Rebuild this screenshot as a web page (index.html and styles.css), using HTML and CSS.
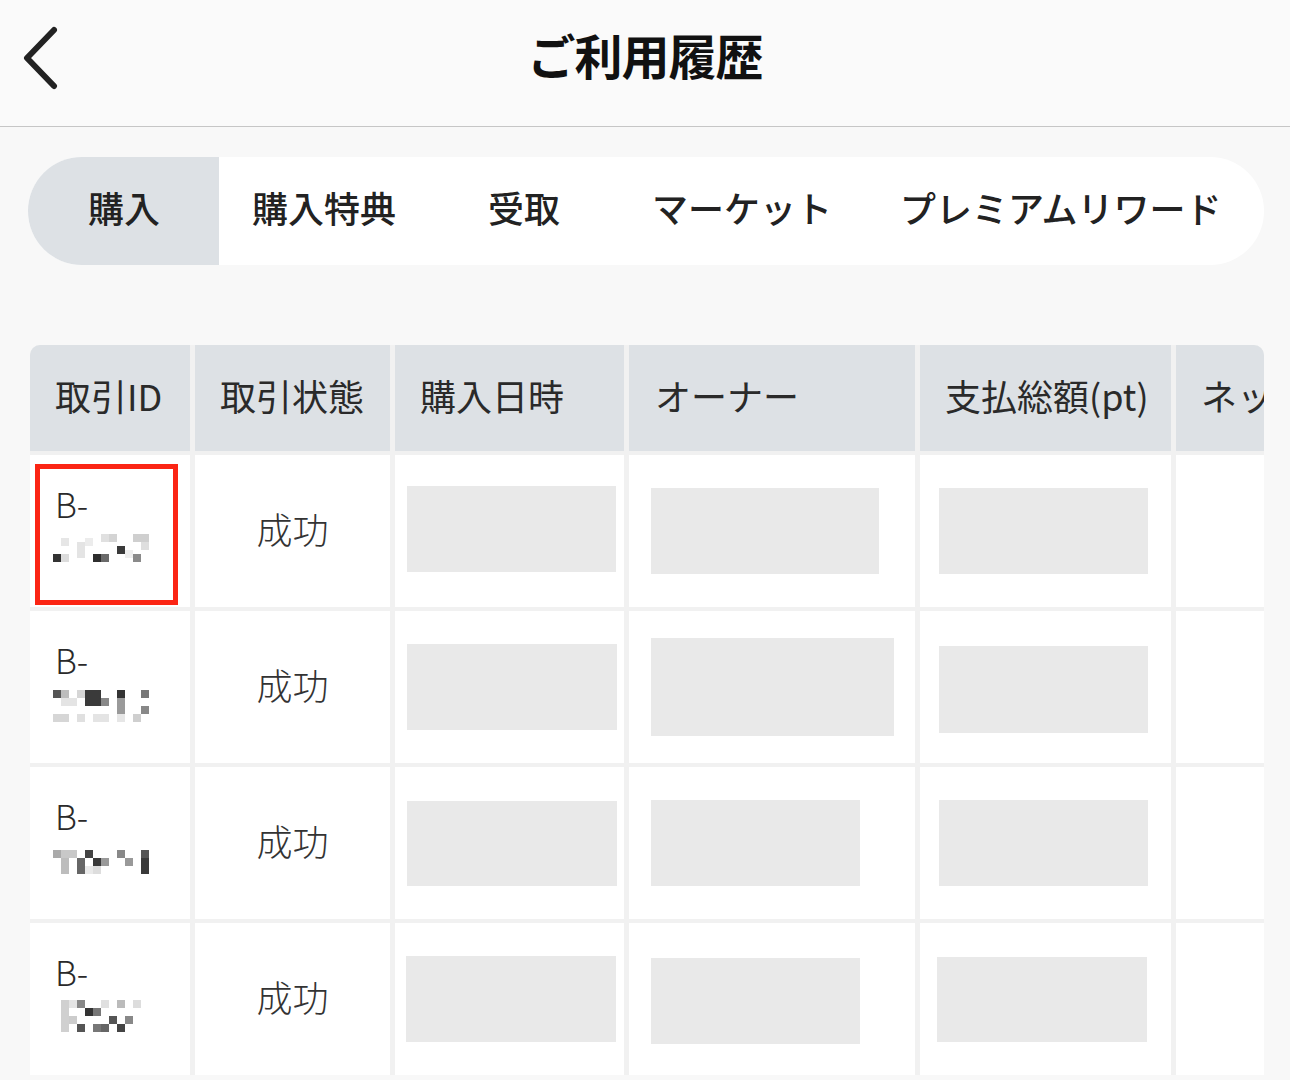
FILE: index.html
```html
<!DOCTYPE html>
<html lang="ja">
<head>
    <meta charset="UTF-8">
    <meta name="viewport" content="width=device-width, initial-scale=1.0">
    <title>ご利用履歴</title>
    <link rel="stylesheet" href="styles.css">
</head>
<body>
<header class="topbar">
    <a class="back">
        <svg width="40" height="64" viewBox="0 0 40 64"><path d="M33 4 L6 32 L33 60" fill="none" stroke="#222" stroke-width="6" stroke-linecap="round" stroke-linejoin="round"/></svg>
    </a>
    <h1 class="title">ご利用履歴</h1>
</header>

<nav class="tabs">
    <a class="tab active">購入</a>
    <a class="tab t2">購入特典</a>
    <a class="tab">受取</a>
    <a class="tab">マーケット</a>
    <a class="tab t5">プレミアムリワード</a>
</nav>

<div class="table">
    <div class="th">取引ID</div>
    <div class="th">取引状態</div>
    <div class="th">購入日時</div>
    <div class="th c4">オーナー</div>
    <div class="th c5">支払総額(pt)</div>
    <div class="th last">ネットワーク</div>

    <!-- row 1 -->
    <div class="td id">
        <span class="bid">B-</span>
        <svg class="mosaic" width="100" height="36" viewBox="0 0 100 36">
            <rect x="8" y="6" width="8" height="8" fill="#e6e6e6"/><rect x="32" y="6" width="8" height="8" fill="#ececec"/>
            <rect x="48" y="2" width="8" height="8" fill="#e0e0e0"/><rect x="56" y="2" width="8" height="8" fill="#d4d4d4"/>
            <rect x="80" y="2" width="16" height="8" fill="#cfcfcf"/><rect x="24" y="10" width="8" height="16" fill="#e4e4e4"/>
            <rect x="64" y="14" width="8" height="8" fill="#3a3a3a"/><rect x="88" y="10" width="8" height="8" fill="#dedede"/>
            <rect x="0" y="22" width="8" height="8" fill="#333"/><rect x="8" y="22" width="8" height="8" fill="#dcdcdc"/>
            <rect x="40" y="22" width="8" height="8" fill="#2e2e2e"/><rect x="48" y="22" width="8" height="8" fill="#6a6a6a"/>
            <rect x="80" y="22" width="8" height="8" fill="#8a8a8a"/><rect x="72" y="18" width="8" height="8" fill="#eee"/>
        </svg>
        <span class="mark"></span>
    </div>
    <div class="td status">成功</div>
    <div class="td p3"><span class="ph" style="width:209px;height:86px;margin-top:-5px"></span></div>
    <div class="td p4"><span class="ph" style="width:228px;height:86px"></span></div>
    <div class="td p5"><span class="ph" style="width:209px;height:86px"></span></div>
    <div class="td"></div>

    <!-- row 2 -->
    <div class="td id">
        <span class="bid">B-</span>
        <svg class="mosaic" width="100" height="36" viewBox="0 0 100 36">
            <rect x="0" y="2" width="8" height="8" fill="#555"/><rect x="8" y="2" width="8" height="8" fill="#bdbdbd"/>
            <rect x="24" y="2" width="8" height="8" fill="#d6d6d6"/><rect x="32" y="2" width="16" height="16" fill="#3a3a3a"/>
            <rect x="48" y="10" width="8" height="8" fill="#888"/><rect x="64" y="2" width="8" height="8" fill="#333"/>
            <rect x="64" y="10" width="8" height="16" fill="#9a9a9a"/><rect x="88" y="2" width="8" height="8" fill="#777"/>
            <rect x="88" y="18" width="8" height="8" fill="#888"/><rect x="8" y="10" width="16" height="8" fill="#e4e4e4"/>
            <rect x="0" y="26" width="16" height="8" fill="#d6d6d6"/><rect x="24" y="26" width="8" height="8" fill="#e0e0e0"/>
            <rect x="40" y="26" width="16" height="8" fill="#e4e4e4"/><rect x="64" y="26" width="8" height="8" fill="#e6e6e6"/>
            <rect x="80" y="26" width="8" height="8" fill="#cfcfcf"/>
        </svg>
    </div>
    <div class="td status">成功</div>
    <div class="td p3"><span class="ph" style="width:210px;height:86px"></span></div>
    <div class="td p4"><span class="ph" style="width:243px;height:98px"></span></div>
    <div class="td p5"><span class="ph" style="width:209px;height:87px;margin-top:5px"></span></div>
    <div class="td"></div>

    <!-- row 3 -->
    <div class="td id">
        <span class="bid">B-</span>
        <svg class="mosaic" width="100" height="36" viewBox="0 0 100 36">
            <rect x="0" y="6" width="8" height="8" fill="#aaa"/><rect x="8" y="6" width="16" height="8" fill="#c8c8c8"/>
            <rect x="8" y="14" width="8" height="16" fill="#bdbdbd"/><rect x="24" y="14" width="8" height="16" fill="#666"/>
            <rect x="32" y="6" width="8" height="8" fill="#444"/><rect x="40" y="14" width="8" height="8" fill="#3a3a3a"/>
            <rect x="48" y="14" width="8" height="8" fill="#999"/><rect x="40" y="22" width="8" height="8" fill="#ddd"/>
            <rect x="64" y="6" width="8" height="8" fill="#888"/><rect x="72" y="14" width="8" height="8" fill="#999"/>
            <rect x="88" y="6" width="8" height="8" fill="#555"/><rect x="88" y="14" width="8" height="16" fill="#3a3a3a"/>
            <rect x="32" y="22" width="8" height="8" fill="#eaeaea"/>
        </svg>
    </div>
    <div class="td status">成功</div>
    <div class="td p3"><span class="ph" style="width:210px;height:85px"></span></div>
    <div class="td p4"><span class="ph" style="width:209px;height:86px"></span></div>
    <div class="td p5"><span class="ph" style="width:209px;height:86px"></span></div>
    <div class="td"></div>

    <!-- row 4 -->
    <div class="td id">
        <span class="bid">B-</span>
        <svg class="mosaic" width="100" height="36" viewBox="0 0 100 36">
            <rect x="8" y="0" width="8" height="32" fill="#d0d0d0"/><rect x="16" y="0" width="8" height="8" fill="#e4e4e4"/>
            <rect x="24" y="0" width="8" height="8" fill="#888"/><rect x="32" y="8" width="8" height="8" fill="#333"/>
            <rect x="40" y="8" width="8" height="8" fill="#777"/><rect x="48" y="0" width="8" height="8" fill="#e0e0e0"/>
            <rect x="64" y="0" width="8" height="8" fill="#bbb"/><rect x="80" y="0" width="8" height="8" fill="#ddd"/>
            <rect x="24" y="24" width="8" height="8" fill="#555"/><rect x="40" y="24" width="8" height="8" fill="#777"/>
            <rect x="48" y="24" width="8" height="8" fill="#666"/><rect x="56" y="16" width="8" height="8" fill="#555"/>
            <rect x="64" y="24" width="8" height="8" fill="#444"/><rect x="72" y="16" width="8" height="8" fill="#888"/>
            <rect x="16" y="16" width="8" height="8" fill="#ccc"/>
        </svg>
    </div>
    <div class="td status">成功</div>
    <div class="td p3"><span class="ph" style="width:210px;height:86px;margin-left:-1px"></span></div>
    <div class="td p4"><span class="ph" style="width:209px;height:86px;margin-top:4px"></span></div>
    <div class="td p5"><span class="ph" style="width:210px;height:85px;margin-left:-2px"></span></div>
    <div class="td"></div>
</div>
</body>
</html>
```

FILE: styles.css
```css
html, body {
    margin: 0;
    padding: 0;
}

body {
    width: 1290px;
    height: 1080px;
    overflow: hidden;
    background: #f8f8f8;
    font-family: "Noto Sans CJK JP", "Noto Sans", sans-serif;
    color: #222;
}

.topbar {
    position: relative;
    height: 126px;
    border-bottom: 1px solid #c6c6c6;
    background: #fafafa;
    display: flex;
    align-items: center;
    justify-content: center;
}

.back {
    position: absolute;
    left: 21px;
    top: 26px;
    width: 40px;
    height: 64px;
}

.back svg {
    display: block;
}

.title {
    margin: 0;
    font-size: 48px;
    font-weight: 700;
    letter-spacing: -1px;
    color: #111;
    line-height: 1;
    margin-top: -18px;
}

.tabs {
    margin: 30px 26px 0 28px;
    height: 108px;
    background: #fff;
    border-radius: 54px;
    overflow: hidden;
    display: flex;
    align-items: center;
    font-size: 36px;
    font-weight: 500;
    color: #222;
}

.tab {
    display: flex;
    align-items: center;
    height: 100%;
    box-sizing: border-box;
    padding: 0 46px 8px;
    white-space: nowrap;
}

.tab.active {
    background: #dde1e5;
    padding: 0 59px 8px 60px;
}

.tab.t2 {
    padding-left: 33px;
}

.tab.t5 {
    padding-left: 22px;
}

.table {
    margin: 80px 26px 0 30px;
    border-radius: 10px 10px 0 0;
    overflow: hidden;
    background: #f1f1f1;
    display: grid;
    grid-template-columns: 160px 195px 229px 286px 251px 200px;
    grid-template-rows: 106px 152px 152px 152px 152px;
    column-gap: 5px;
    row-gap: 4px;
}

.th {
    background: #dde1e5;
    display: flex;
    align-items: center;
    padding-left: 25px;
    padding-bottom: 6px;
    font-size: 36px;
    color: #2a2a2a;
    white-space: nowrap;
}

.th.c4 {
    padding-left: 26px;
}

.th.c5 {
    padding-left: 25px;
}

.th.last {
    overflow: hidden;
}

.td {
    position: relative;
    background: #fff;
    display: flex;
    align-items: center;
}

.td.id {
    flex-direction: column;
    align-items: flex-start;
    justify-content: center;
    padding-left: 25px;
    padding-bottom: 10px;
}

.bid {
    font-size: 34px;
    font-weight: 300;
    color: #2a2a2a;
    line-height: 40px;
    margin-bottom: 8px;
}

.mosaic {
    display: block;
    margin-left: -2px;
}

.mark {
    position: absolute;
    left: 5px;
    top: 9px;
    right: 12px;
    bottom: 2px;
    border: 5px solid #fb2514;
}

.status {
    justify-content: center;
    padding-bottom: 6px;
    font-size: 36px;
    font-weight: 300;
    color: #333;
}

.p3 {
    padding-left: 12px;
}

.p4 {
    padding-left: 22px;
}

.p5 {
    padding-left: 19px;
}

.ph {
    display: block;
    background: #e9e9e9;
}
```
